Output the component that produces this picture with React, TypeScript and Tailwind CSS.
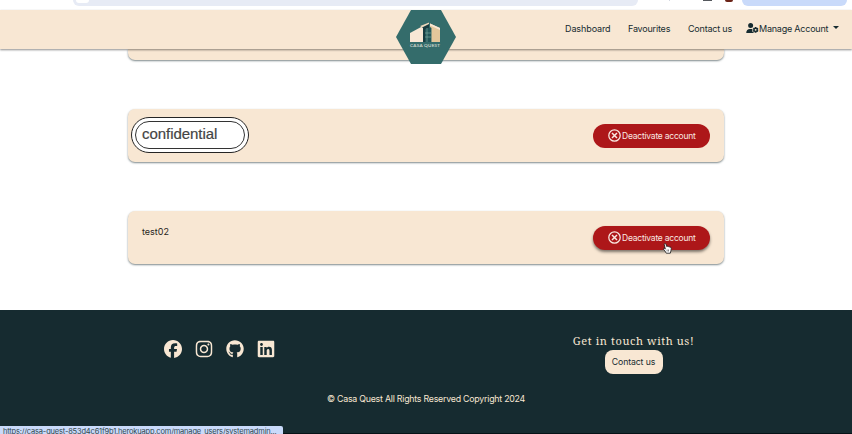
import type { ReactNode } from "react";
import { FaFacebook, FaGithub, FaInstagram, FaLinkedin, FaUserGear } from "react-icons/fa6";

function BrowserEdge() {
  return (
    <div className="flex h-[10px] items-start overflow-hidden bg-white pl-[73px]">
      <div className="h-[6px] w-[565px] rounded-b-[8px] bg-[#e7ebf5] pl-[3px]">
        <div className="h-[3px] w-[13px] rounded-b-full bg-white" />
      </div>
      <div className="ml-[31px] h-px w-px bg-[#d4d8e2]" />
      <div className="ml-[33px] h-px w-[9px] bg-[#55585d]" />
      <div className="ml-[13px] h-[2px] w-[8px] rounded-b-full bg-[#6b2418]" />
      <div className="ml-[9px] h-[6px] w-[105px] rounded-b-[8px] bg-[#c9dafa]" />
    </div>
  );
}

function Logo() {
  return (
    <svg className="absolute left-[396px] top-0 h-[54px] w-[60px]" viewBox="0 0 60 54">
      <path d="M15 0H45L60 27L45 54H15L0 27Z" fill="#346c6b" />
      <path d="M14 23L26 16.5L27.5 18V32H14Z" fill="#f8e7d5" />
      <path d="M24 16L33 12.5V32H27V18Z" fill="#183b40" />
      <path d="M24 16L33 12.5V14L26 17.5Z" fill="#e9d8bd" />
      <path d="M29 19L35 17V32H29Z" fill="#23575a" />
      <path d="M31 18V32M29 23H35M29 27H35" stroke="#84b0a5" strokeWidth=".6" />
      <path d="M34 13.5L44 18V32H35.5V18L34 17Z" fill="#e4c79b" />
      <path d="M34 13.5L44 18V20L34 15.5Z" fill="#f8e7d5" />
      <text x="14" y="36.7" textLength="30" fontSize="4.6" fill="#f3eee3" fontFamily="Lato, sans-serif">CASA QUEST</text>
    </svg>
  );
}

function Navbar() {
  return (
    <header className="relative z-10 h-[39px] bg-[#f8e7d3] shadow-[0_1px_2px_rgba(0,0,0,0.45)]">
      <nav className="flex h-[38px] items-center pl-[565px] text-[9px] text-[#162b30]">
        <a className="w-[63px] tracking-[-0.1px]">Dashboard</a>
        <a className="w-[60px] tracking-[-0.2px]">Favourites</a>
        <a className="w-[58px] tracking-[-0.2px]">Contact us</a>
        <FaUserGear className="-mt-[3px] h-[10px] w-[13px]" />
        <a className="w-[74px] whitespace-nowrap tracking-[-0.22px]">Manage Account</a>
        <span className="-mt-[4px] h-0 w-0 border-x-[3px] border-t-[3px] border-x-transparent border-t-[#162b30]" />
      </nav>
      <Logo />
    </header>
  );
}

function AccountCard({ children, active = false }: { children: ReactNode; active?: boolean }) {
  return (
    <article className="ml-[128px] flex h-[53px] w-[596px] shrink-0 items-center justify-between rounded-[7px] bg-[#f8e7d3] pr-[14px] shadow-[0_1px_2px_rgba(20,40,45,0.55)]">
      {children}
      <button className={`relative flex h-[24px] w-[117px] items-center rounded-full bg-[#ad1719] pl-[15px] text-[8.5px] text-[#f9e8e1] ${active ? "shadow-[0_2px_3px_rgba(0,0,0,0.5)]" : ""}`}>
        <svg className="mr-px h-[13px] w-[13px] shrink-0" viewBox="0 0 13 13" fill="none" stroke="currentColor" strokeWidth="1.25">
          <circle cx="6.5" cy="6.5" r="5.7" />
          <path d="M4 4L9 9M9 4L4 9" strokeWidth="1.5" />
        </svg>
        <span className="whitespace-nowrap pt-px tracking-[-0.22px]">Deactivate account</span>
        {active && (
          <svg className="absolute left-[70px] top-[17px] h-[11px] w-[9px]" viewBox="0 0 9 11">
            <path d="M1.2 1.2C1.6.2 2.7.5 3 1.3L3.7 3.5C4.3 3 5 3.2 5.3 3.8C6 3.3 6.6 3.7 6.8 4.2C8 3.9 8.3 4.7 8.3 5.5C8.3 7.5 7.6 8.3 7.3 10.2H3.3C2.8 8.5 1 7.3.5 6.1C.2 5.1 1.3 4.8 2.3 6Z" fill="white" stroke="#171717" strokeWidth=".8" />
            <path d="M4.1 6.5V8.5M5.5 6.5V8.5" stroke="#171717" strokeWidth=".5" />
          </svg>
        )}
      </button>
    </article>
  );
}

function Footer() {
  return (
    <footer className="relative h-[124px] shrink-0 border-b border-[#071216] bg-[#162b30] text-[#f8e7d3]">
      <div className="flex h-[79px] items-start">
        <div className="flex w-[573px] gap-[13px] pl-[163.5px] pt-[30px]">
          <FaFacebook size={18} />
          <FaInstagram size={18} className="scale-105" />
          <FaGithub size={18} />
          <FaLinkedin size={18} className="scale-105" />
        </div>
        <div className="flex w-[121px] flex-col items-center pt-[23px]">
          <h2 className="h-[17px] whitespace-nowrap font-['Noto_Serif','Liberation_Serif',serif] text-[11px] leading-[15px] tracking-[0.6px]">Get in touch with us!</h2>
          <button className="h-[24px] w-[58px] rounded-[8px] bg-[#f8e7d3] pt-px text-[8.7px] tracking-[-0.1px] text-[#162b30]">Contact us</button>
        </div>
      </div>
      <p className="pt-[3px] text-center text-[8.8px] leading-[13px] tracking-[-0.23px]">© Casa Quest All Rights Reserved Copyright 2024</p>
      <div className="absolute bottom-[-1px] left-0 h-[8px] w-[283px] overflow-hidden rounded-tr-[2px] bg-[#c9dafa] pl-[3px] pt-[2px] text-[7.5px] leading-[8px] text-[#34464c]">
        <span className="whitespace-nowrap tracking-[-0.18px]">https://casa-quest-853d4c61f9b1.herokuapp.com/manage_users/systemadmin...</span>
      </div>
    </footer>
  );
}

export default function App() {
  return (
    <div className="flex h-[434px] w-[852px] flex-col overflow-hidden bg-white font-['Inter','Liberation_Sans',sans-serif]">
      <BrowserEdge />
      <Navbar />
      <main className="flex h-[261px] shrink-0 flex-col">
        <div className="mb-[49px] ml-[128px] h-[11px] w-[596px] shrink-0 rounded-b-[7px] bg-[#f8e7d3] shadow-[0_1px_2px_rgba(20,40,45,0.55)]" />
        <AccountCard>
          <div className="mb-[2px] ml-[3px] flex h-[36px] w-[118px] items-center rounded-full border border-[#252525] bg-white p-[3px]">
            <span className="flex h-[28px] w-full items-center rounded-full border border-[#333] pl-[6px] font-['Liberation_Sans',Arial,sans-serif] text-[15px] tracking-[-0.05px] text-[#444] [-webkit-text-stroke:0.2px_#444]">confidential</span>
          </div>
        </AccountCard>
        <div className="h-[49px] shrink-0" />
        <AccountCard active>
          <span className="mb-[12px] ml-[14px] text-[9px] text-[#261f20]">test02</span>
        </AccountCard>
      </main>
      <Footer />
    </div>
  );
}
